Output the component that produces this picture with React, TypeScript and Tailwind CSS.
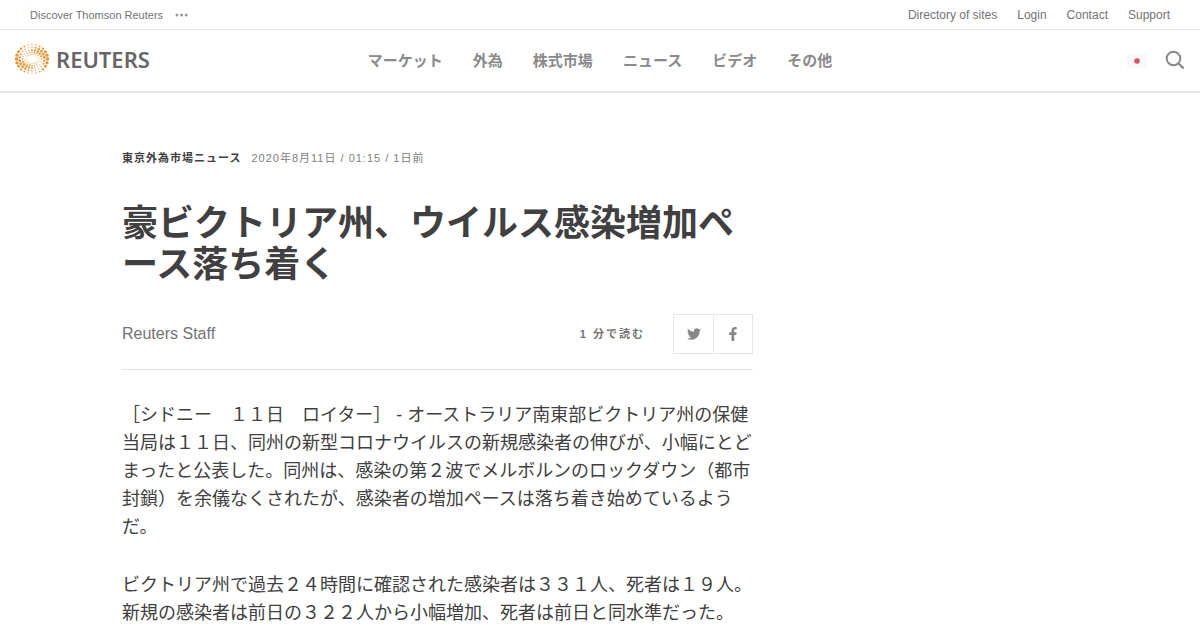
import { FaTwitter, FaFacebookF } from 'react-icons/fa';

const topLinks = ['Directory of sites', 'Login', 'Contact', 'Support'];
const sections = ['マーケット', '外為', '株式市場', 'ニュース', 'ビデオ', 'その他'];
const paragraphs = [
  '［シドニー　１１日　ロイター］ - オーストラリア南東部ビクトリア州の保健当局は１１日、同州の新型コロナウイルスの新規感染者の伸びが、小幅にとどまったと公表した。同州は、感染の第２波でメルボルンのロックダウン（都市封鎖）を余儀なくされたが、感染者の増加ペースは落ち着き始めているようだ。',
  'ビクトリア州で過去２４時間に確認された感染者は３３１人、死者は１９人。新規の感染者は前日の３２２人から小幅増加、死者は前日と同水準だった。',
];

// Each ring has its own radius, dot count and the direction in which its dots grow.
const rings = [
  { r: 15.5, n: 24, peak: 0, min: 0.65, max: 1.7 },
  { r: 12.4, n: 22, peak: -24, min: 0.6, max: 1.45 },
  { r: 9.6, n: 20, peak: -48, min: 0.5, max: 1.25 },
  { r: 7.2, n: 18, peak: -75, min: 0.45, max: 0.85 },
  { r: 5.2, n: 14, peak: -100, min: 0.4, max: 0.6 },
];

const dots = rings.flatMap(({ r, n, peak, min, max }, ring) =>
  Array.from({ length: n }, (_, i) => {
    const a = ((i + (ring % 2) / 2) / n) * Math.PI * 2;
    const k = Math.pow(Math.cos(a - (peak * Math.PI) / 180), 2);
    return { x: 17 + r * Math.cos(a), y: 17 + r * 0.94 * Math.sin(a), s: min + (max - min) * k };
  }),
);

function Logo() {
  return (
    <a href="#" className="flex items-center gap-[7px] justify-self-start pb-[3px]">
      <svg viewBox="0 0 34 34" className="size-[34px]" fill="#e9942f" aria-hidden="true">
        {dots.map((d, i) => (
          <circle key={i} cx={d.x} cy={d.y} r={d.s} />
        ))}
      </svg>
      <span className="font-['Noto_Sans',sans-serif] text-[22px] leading-6 font-semibold text-[#666]">REUTERS</span>
    </a>
  );
}

export default function App() {
  return (
    <div className="bg-white font-['Liberation_Sans','Noto_Sans_CJK_JP',sans-serif] text-[#404040]" lang="ja">
      <div className="flex h-[30px] items-center justify-between border-b border-[#e6e6e6] px-[30px] text-[#737373]">
        <a href="#" className="flex items-center gap-3 text-[11px] leading-5">
          Discover Thomson Reuters
          <svg viewBox="0 0 14 4" className="h-1 w-3.5" fill="#999" aria-hidden="true">
            <circle cx="2" cy="2" r="1.5" />
            <circle cx="6.6" cy="2" r="1.5" />
            <circle cx="11.2" cy="2" r="1.5" />
          </svg>
        </a>
        <nav className="flex gap-5 text-xs">
          {topLinks.map((l) => (
            <a key={l} href="#">{l}</a>
          ))}
        </nav>
      </div>

      <header className="grid h-[63px] grid-cols-[1fr_auto_1fr] items-center border-b-2 border-[#e6e6e6] px-[15px]">
        <Logo />
        <nav className="flex gap-[30px] text-[15px] leading-5 font-bold text-[#8a8a8a]">
          {sections.map((s) => (
            <a key={s} href="#">{s}</a>
          ))}
        </nav>
        <div className="flex items-center gap-[18px] justify-self-end">
          <button type="button" aria-label="日本">
            <svg viewBox="0 0 20 14" className="h-3.5 w-5" aria-hidden="true">
              <rect width="20" height="14" fill="#f7f8f8" />
              <circle cx="10" cy="7" r="2.8" fill="#dc5163" />
            </svg>
          </button>
          <button type="button" aria-label="検索" className="pb-0.5">
            <svg viewBox="0 0 20 20" className="size-5" fill="none" stroke="#888" strokeWidth="2" aria-hidden="true">
              <circle cx="8.5" cy="8.5" r="6.8" />
              <path d="M13.3 13.3 18.6 18.4" strokeWidth="2.2" />
            </svg>
          </button>
        </div>
      </header>

      <main className="mx-auto max-w-[956px] pt-14">
        <article className="max-w-[631px]">
          <div className="flex gap-[10px] text-[11px] leading-[18px] tracking-[1px]">
            <a href="#" className="font-bold text-[#404040]">東京外為市場ニュース</a>
            <span className="text-[#808080]">2020年8月11日 / 01:15 / 1日前</span>
          </div>
          <h1 className="mt-9 text-[36px] leading-[41px] font-bold">豪ビクトリア州、ウイルス感染増加ペース落ち着く</h1>
          <div className="mt-[29px] flex items-center border-b border-[#e6e6e6] pb-[15px]">
            <span className="flex-1 text-base text-[#737373]">Reuters Staff</span>
            <span className="mr-7 text-[11px] font-bold tracking-[2px] text-[#737373]">1 分で読む</span>
            <div className="flex divide-x divide-[#e6e6e6] border border-[#e6e6e6] text-[#888]">
              <button type="button" aria-label="Twitter" className="flex h-[38px] w-10 items-center justify-center">
                <FaTwitter className="size-3.5" />
              </button>
              <button type="button" aria-label="Facebook" className="flex h-[38px] w-[38px] items-center justify-center">
                <FaFacebookF className="size-3.5" />
              </button>
            </div>
          </div>
          <div className="mt-[31px] flex flex-col gap-[30px] text-lg leading-7 [text-spacing-trim:space-all]">
            {paragraphs.map((p) => (
              <p key={p}>{p}</p>
            ))}
          </div>
        </article>
      </main>
    </div>
  );
}
